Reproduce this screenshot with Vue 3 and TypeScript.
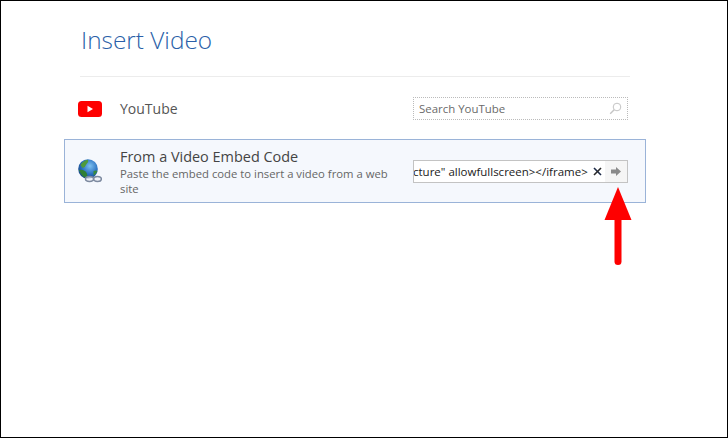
<script setup lang="ts">
const heading: string = 'Insert Video'
</script>

<template>
  <div class="frame">
    <div class="page">
      <h1 class="title">{{ heading }}</h1>
      <div class="rule"></div>
      <div class="row yt">
        <svg class="icon-yt" width="24" height="16" viewBox="0 0 24 16">
          <rect width="24" height="16" rx="3.5" fill="#fe0000" />
          <path d="M9.5 4.8 L15 8 L9.5 11.2 Z" fill="#fff" />
        </svg>
        <div class="label">YouTube</div>
        <div class="search">
          <span class="search-text">Search YouTube</span>
          <svg class="mag" width="13" height="13" viewBox="0 0 13 13" fill="none" stroke="#c4c4c4" stroke-width="1">
            <circle cx="8" cy="5" r="3.8" />
            <path d="M5.2 7.8 L1.2 11.8" stroke-width="1.4" />
          </svg>
        </div>
      </div>
      <div class="row embed">
        <svg class="icon-globe" width="24" height="24" viewBox="0 0 24 24">
          <defs>
            <radialGradient id="sea" cx="0.6" cy="0.35" r="0.75">
              <stop offset="0" stop-color="#7cc0f0" />
              <stop offset="0.55" stop-color="#2a70c0" />
              <stop offset="1" stop-color="#123c78" />
            </radialGradient>
          </defs>
          <circle cx="10" cy="10" r="9.8" fill="url(#sea)" />
          <path d="M2.5 6 Q5 1.5 10 0.8 Q11 3 8.5 5 Q7.5 8 4.5 9 Z" fill="#4f9a3c" />
          <path d="M1 11 Q5 10 7.5 12.5 Q10 15 9 19 Q3.5 18 1 11 Z" fill="#2f7f34" />
          <path d="M15.5 12 Q18 11 19.5 12 Q18 15 15.5 16.5 Z" fill="#3b8a3c" />
          <g fill="#eef0f5" fill-opacity="0.75" stroke="#7d8aa0" stroke-width="1.5">
            <ellipse cx="11.5" cy="20" rx="4" ry="2.4" />
            <ellipse cx="19.5" cy="20" rx="3.8" ry="2.4" />
          </g>
        </svg>
        <div class="copy">
          <div class="embed-title">From a Video Embed Code</div>
          <div class="embed-desc">Paste the embed code to insert a video from a web site</div>
        </div>
        <div class="codebox">
          <div class="code-clip"><span class="code">cture" allowfullscreen&gt;&lt;/iframe&gt;</span></div>
          <svg class="clear" width="9" height="9" viewBox="0 0 9 9">
            <path d="M1 1 L8 8" stroke="#1c2a48" stroke-width="1.6" />
            <path d="M8 1 L1 8" stroke="#2a2a2a" stroke-width="1.6" />
          </svg>
          <div class="go">
            <svg width="10" height="9" viewBox="0 0 10 9">
              <path d="M0 2.5 H5 V0 L10 4.5 L5 9 V6.5 H0 Z" fill="#8a8a8a" />
            </svg>
          </div>
        </div>
      </div>
    </div>
    <svg class="callout" width="28" height="82" viewBox="0 0 28 82">
      <path d="M14 0 L27.5 33 L0.5 33 Z" fill="#fe0000" />
      <path d="M14 30 V74.5" stroke="#fe0000" stroke-width="7" stroke-linecap="round" />
    </svg>
  </div>
</template>

<style scoped>
.frame {
  position: relative;
  box-sizing: border-box;
  width: 728px;
  height: 438px;
  border: 1px solid #000;
  background: #fff;
  font-family: "Open Sans", "Noto Sans", sans-serif;
  overflow: hidden;
}
.page {
  display: flex;
  flex-direction: column;
  padding: 0 80px 0 63px;
}
.title {
  margin: 21px 0 0 17px;
  font-size: 24.4px;
  line-height: 36px;
  font-weight: 300;
  color: #2b5fa8;
}
.rule {
  height: 1px;
  margin: 18px 17px 0 16px;
  background: #ececec;
}
.row {
  display: flex;
  align-items: center;
  box-sizing: border-box;
}
.yt {
  height: 43px;
  margin-top: 10px;
  padding: 0 1px 0 14px;
}
.icon-yt {
  flex: none;
}
.label {
  margin-left: 18px;
  width: 293px;
  font-size: 14px;
  color: #555;
}
.search {
  display: flex;
  align-items: center;
  justify-content: space-between;
  box-sizing: border-box;
  width: 215px;
  height: 23px;
  padding: 0 5px;
  border: 1px dotted #bbb;
}
.search-text {
  font-size: 11.45px;
  color: #6a6a6a;
}
.embed {
  width: 582px;
  height: 64px;
  margin-top: 9px;
  padding: 0 17px 0 13px;
  background: #f5f8fd;
  border: 1px solid #9ab3d8;
}
.icon-globe {
  flex: none;
}
.copy {
  width: 275px;
  margin: 2px 18px 0;
  flex: none;
}
.embed-title {
  font-size: 14.45px;
  line-height: 18px;
  color: #444;
}
.embed-desc {
  font-size: 11.3px;
  line-height: 15px;
  color: #666;
}
.codebox {
  display: flex;
  align-items: center;
  flex: none;
  box-sizing: border-box;
  width: 215px;
  height: 23px;
  background: #fff;
  border: 1px solid #c3c3c3;
}
.code-clip {
  width: 175px;
  padding-bottom: 2px;
  overflow: hidden;
  white-space: nowrap;
  flex: none;
  text-indent: -1px;
}
.code {
  font-size: 11.5px;
  color: #1a1a1a;
}
.clear {
  margin-left: 4px;
  flex: none;
}
.go {
  display: flex;
  align-items: center;
  justify-content: center;
  margin-left: auto;
  width: 22px;
  height: 100%;
  background: #f5f5f5;
}
.callout {
  position: absolute;
  left: 603px;
  top: 186px;
}
</style>
